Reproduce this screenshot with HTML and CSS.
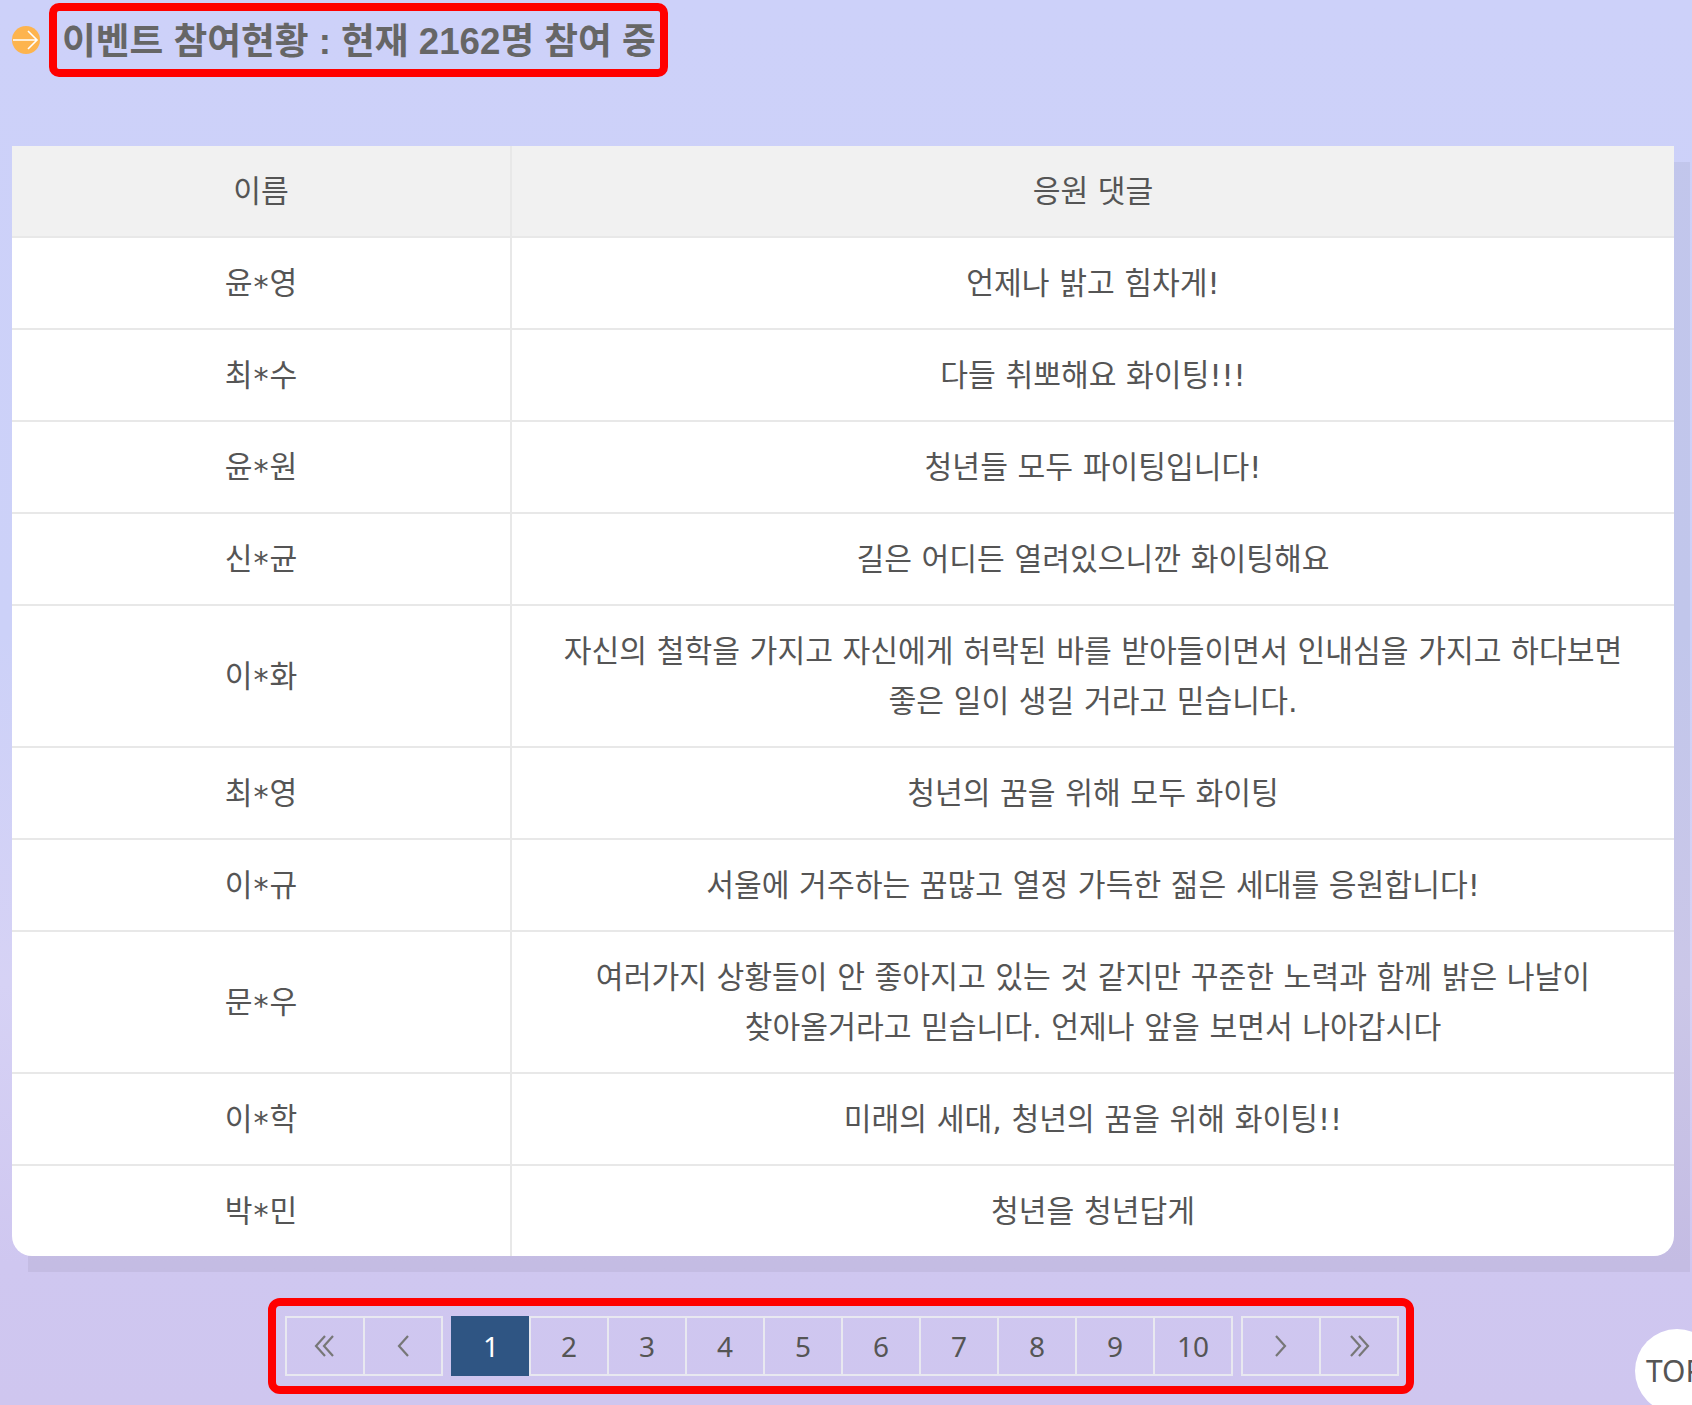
FILE: index.html
```html
<!DOCTYPE html>
<html lang="ko">
<head>
<meta charset="utf-8">
<title>이벤트 참여현황</title>
<link rel="stylesheet" href="styles.css">
</head>
<body>
<main class="page">
  <div class="heading">
    <svg class="bullet" viewBox="0 0 28 28" aria-hidden="true">
      <circle cx="14" cy="14" r="14" fill="#fdb44e"/>
      <path d="M1 14H25M16 5l9 9-9 9" fill="none" stroke="#fff" stroke-width="1.6"/>
    </svg>
    <h2 class="title">이벤트 참여현황 : 현재 2162명 참여 중</h2>
  </div>
  <div class="board-wrap">
  <table class="board">
    <thead>
      <tr><th class="col-name">이름</th><th>응원 댓글</th></tr>
    </thead>
    <tbody>
      <tr><td>윤<span class="mask">*</span>영</td><td>언제나 밝고 힘차게!</td></tr>
      <tr><td>최<span class="mask">*</span>수</td><td>다들 취뽀해요 화이팅!!!</td></tr>
      <tr><td>윤<span class="mask">*</span>원</td><td>청년들 모두 파이팅입니다!</td></tr>
      <tr><td>신<span class="mask">*</span>균</td><td>길은 어디든 열려있으니깐 화이팅해요</td></tr>
      <tr><td>이<span class="mask">*</span>화</td><td>자신의 철학을 가지고 자신에게 허락된 바를 받아들이면서 인내심을 가지고 하다보면<br>좋은 일이 생길 거라고 믿습니다.</td></tr>
      <tr><td>최<span class="mask">*</span>영</td><td>청년의 꿈을 위해 모두 화이팅</td></tr>
      <tr><td>이<span class="mask">*</span>규</td><td>서울에 거주하는 꿈많고 열정 가득한 젊은 세대를 응원합니다!</td></tr>
      <tr><td>문<span class="mask">*</span>우</td><td>여러가지 상황들이 안 좋아지고 있는 것 같지만 꾸준한 노력과 함께 밝은 나날이<br>찾아올거라고 믿습니다. 언제나 앞을 보면서 나아갑시다</td></tr>
      <tr><td>이<span class="mask">*</span>학</td><td>미래의 세대, 청년의 꿈을 위해 화이팅!!</td></tr>
      <tr><td>박<span class="mask">*</span>민</td><td>청년을 청년답게</td></tr>
    </tbody>
  </table>
  </div>
  <nav class="pager">
    <div class="group">
      <a class="cell"><svg class="chev" viewBox="0 0 24 24"><path d="M12 2 3 12l9 10M20 2l-9 10 9 10"/></svg></a>
      <a class="cell"><svg class="chev" viewBox="0 0 24 24"><path d="M17 2 8 12l9 10"/></svg></a>
    </div>
    <div class="group">
      <a class="cell current">1</a>
      <a class="cell">2</a>
      <a class="cell">3</a>
      <a class="cell">4</a>
      <a class="cell">5</a>
      <a class="cell">6</a>
      <a class="cell">7</a>
      <a class="cell">8</a>
      <a class="cell">9</a>
      <a class="cell">10</a>
    </div>
    <div class="group">
      <a class="cell"><svg class="chev" viewBox="0 0 24 24"><path d="m7 2 9 10-9 10"/></svg></a>
      <a class="cell"><svg class="chev" viewBox="0 0 24 24"><path d="m4 2 9 10-9 10M12 2l9 10-9 10"/></svg></a>
    </div>
  </nav>
</main>
<a class="top-button">TOP</a>
</body>
</html>
```
FILE: styles.css
```css
html, body {
  margin: 0;
  padding: 0;
  height: 1405px;
  overflow: hidden;
}
body {
  position: relative;
  background: linear-gradient(180deg, #cdd1f9 0%, #ccd1f8 45%, #d6d2f5 70%, #cfc7f0 90%, #cfc6ef 100%);
  font-family: "Liberation Sans", "Noto Sans CJK KR", sans-serif;
  color: #555;
}
.page {
  padding: 3px 18px 0 12px;
}
.heading {
  display: flex;
  align-items: center;
  gap: 9px;
  height: 74px;
}
.bullet {
  width: 28px;
  height: 28px;
  flex: none;
}
.title {
  margin: 0;
  box-sizing: border-box;
  height: 74px;
  padding: 2px 4px 0 5px;
  border: 8px solid #f00;
  border-radius: 10px;
  font-size: 36.7px;
  font-weight: 700;
  line-height: 58px;
  color: #666;
  white-space: nowrap;
}
.board-wrap {
  position: relative;
  width: 1662px;
  margin-top: 69px;
}
.board-wrap::before {
  content: "";
  position: absolute;
  top: 16px;
  left: 16px;
  right: -16px;
  bottom: -16px;
  background: rgba(0, 0, 0, .05);
}
.board {
  position: relative;
  width: 1662px;
  table-layout: fixed;
  border-collapse: separate;
  border-spacing: 0;
  background: #fff;
  border-radius: 0 0 20px 20px;
  font-family: "DejaVu Sans", "Noto Sans CJK KR", sans-serif;
  font-size: 30.2px;
}
.board th, .board td {
  padding: 21px 40px 19px;
  line-height: 50px;
  text-align: center;
  font-weight: 400;
  border-bottom: 2px solid #e8e8e8;
  border-left: 2px solid #e8e8e8;
}
.board th:first-child, .board td:first-child {
  border-left: 0;
}
.board th {
  background: #f1f1f1;
}
.board .col-name {
  width: 418px;
}
.board tbody tr:last-child td {
  border-bottom: 0;
}
.mask {
  line-height: 1;
  margin: 0 1px;
  vertical-align: -0.1em;
}
.pager {
  display: flex;
  justify-content: center;
  gap: 8px;
  box-sizing: border-box;
  width: 1146px;
  height: 96px;
  margin: 42px 0 0 256px;
  padding: 10px 0 10px 2px;
  border: 8px solid #f00;
  border-radius: 12px;
}
.group {
  display: flex;
}
.cell {
  box-sizing: border-box;
  width: 80px;
  height: 60px;
  display: flex;
  align-items: center;
  justify-content: center;
  border: 2px solid #e8e8f0;
  margin-left: -2px;
  font-family: "Noto Sans", sans-serif;
  font-size: 28px;
  color: #555;
}
.group .cell:first-child {
  margin-left: 0;
}
.current {
  background: #2f5583;
  border-color: #2f5583;
  color: #fff;
}
.chev {
  width: 24px;
  height: 24px;
  fill: none;
  stroke: #777;
  stroke-width: 2.2;
}
.top-button {
  position: absolute;
  left: 1635px;
  top: 1329px;
  width: 84px;
  height: 84px;
  border-radius: 50%;
  background: #fff;
  box-sizing: border-box;
  padding-left: 11px;
  font-family: "Noto Sans", sans-serif;
  font-size: 30px;
  line-height: 84px;
  color: #555;
}
```
